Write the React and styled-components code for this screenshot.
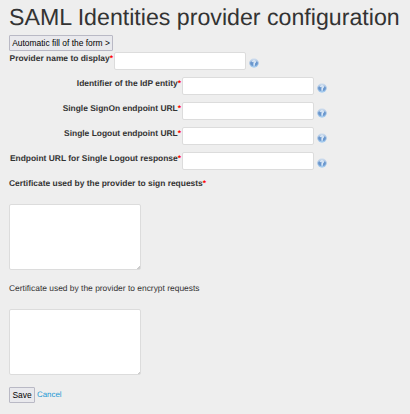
import React from "react";
import styled, { createGlobalStyle } from "styled-components";

const Global = createGlobalStyle`
  * { box-sizing: border-box; }
  body {
    margin: 0;
    background: #eee;
    color: #333;
    font: 8.43px/12px "Liberation Sans", Arial, sans-serif;
    text-rendering: geometricPrecision;
    overflow: hidden;
  }
`;

const Page = styled.main`
  display: flex;
  flex-direction: column;
  align-items: flex-start;
  height: 414px;
  padding: 5px 0 0 9px;
`;

const Title = styled.h1`
  margin: 0 0 6px;
  font-size: 23.18px;
  font-weight: 400;
  line-height: 24px;
  white-space: nowrap;
`;

const Button = styled.button`
  width: ${({ $width }) => $width}px;
  height: 16px;
  padding: 0 0 1px;
  border: 1px solid #b9b9c5;
  border-radius: 1px;
  background: #e9e9ed;
  color: #000;
  font: inherit;
  white-space: nowrap;
`;

const Row = styled.div`
  display: flex;
  align-items: flex-start;
  height: 25px;
`;

const Label = styled.label`
  width: ${({ $width }) => ($width ? `${$width}px` : "auto")};
  height: 12px;
  padding-top: 1px;
  font-weight: ${({ $plain }) => ($plain ? 400 : 700)};
  text-align: ${({ $width }) => ($width ? "right" : "left")};
  white-space: nowrap;
`;

const Required = styled.span`
  color: #f00;
`;

const Input = styled.input`
  width: 132px;
  height: 18px;
  margin: 1px 0 0 1px;
  border: 1px solid #dcdcdc;
  border-radius: 2px;
  background: #fff;
  outline: none;
`;

const HelpIcon = styled.svg`
  width: 10px;
  height: 10px;
  margin: 7px 0 0 3.2px;
`;

const Area = styled.textarea`
  display: block;
  width: 132px;
  height: 66px;
  margin: ${({ $bottom }) => `16px 0 ${$bottom}px`};
  border: 1px solid #dcdcdc;
  border-radius: 2px;
  background: linear-gradient(135deg, transparent 50%, #ccc 50%) right bottom / 3px 3px no-repeat #fff;
  outline: none;
  resize: none;
`;

const Actions = styled.div`
  display: flex;
  align-items: center;
  gap: 2px;
`;

const Cancel = styled.a`
  color: #2299d4;
  font-size: 7.9px;
  text-decoration: none;
`;

function Help() {
  return (
    <HelpIcon viewBox="0 0 10 10" aria-label="Help">
      <defs>
        <linearGradient id="ball" x1="0" y1="0" x2="0" y2="1">
          <stop offset="0" stopColor="#d9e3ef" />
          <stop offset="0.5" stopColor="#91b5de" />
          <stop offset="1" stopColor="#a9cff1" />
        </linearGradient>
      </defs>
      <circle cx="5" cy="5" r="4.7" fill="url(#ball)" />
      <path d="M1.3 4.2V6Q2 7.9 4.2 8V5L2.9 3.5Z" fill="#5788c4" opacity="0.7" />
      <path d="M8.7 4.2V6Q8 7.9 5.8 8V6.3L7 3.5Z" fill="#5788c4" opacity="0.7" />
      <path d="M3.7 4Q3.8 2.8 5 2.8T6.3 4Q6.3 4.7 5.2 5.2V7.4" fill="none" stroke="#edf4fc" strokeWidth="1.1" />
    </HelpIcon>
  );
}

function Field({ id, label, width }) {
  return (
    <Row>
      <Label htmlFor={id} $width={width}>
        {label}
        <Required>*</Required>
      </Label>
      <Input id={id} />
      <Help />
    </Row>
  );
}

const endpoints = [
  ["entity", "Identifier of the IdP entity"],
  ["signon", "Single SignOn endpoint URL"],
  ["logout", "Single Logout endpoint URL"],
  ["response", "Endpoint URL for Single Logout response"],
];

export default function App() {
  return (
    <>
      <Global />
      <Page>
        <Title>SAML Identities provider configuration</Title>
        <Button type="button" $width={104}>Automatic fill of the form &gt;</Button>
        <Field id="name" label="Provider name to display" width={104} />
        {endpoints.map(([id, label]) => (
          <Field key={id} id={id} label={label} width={172} />
        ))}
        <Label htmlFor="sign">
          Certificate used by the provider to sign requests
          <Required>*</Required>
        </Label>
        <Area id="sign" $bottom={11} />
        <Label htmlFor="encrypt" $plain>
          Certificate used by the provider to encrypt requests
        </Label>
        <Area id="encrypt" $bottom={12} />
        <Actions>
          <Button type="submit" $width={26}>Save</Button>
          <Cancel>Cancel</Cancel>
        </Actions>
      </Page>
    </>
  );
}
